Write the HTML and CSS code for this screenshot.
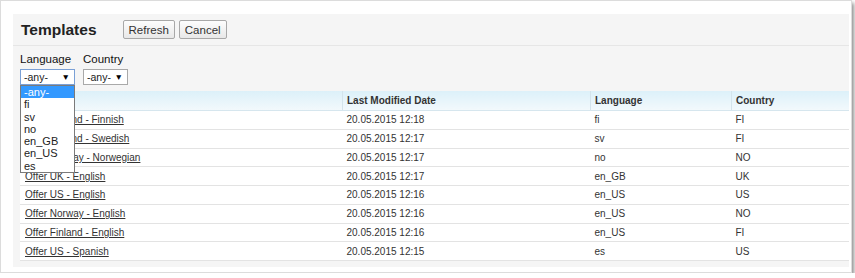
FILE: index.html
```html
<!DOCTYPE html>
<html lang="en">
<head>
    <meta charset="UTF-8">
    <title>Templates</title>
    <link rel="stylesheet" href="styles.css">
</head>
<body>
    <div class="window">
        <div class="panel">
            <div class="panel-header">
                <h2 class="title">Templates</h2>
                <button class="btn">Refresh</button>
                <button class="btn">Cancel</button>
            </div>

            <div class="filters">
                <div class="filter">
                    <div class="filter-label">Language</div>
                    <div class="picker picker-open lang-picker">
                        <span>-any-</span><span class="arrow">&#9660;</span>
                        <ul class="picker-list">
                            <li class="selected">-any-</li>
                            <li>fi</li>
                            <li>sv</li>
                            <li>no</li>
                            <li>en_GB</li>
                            <li>en_US</li>
                            <li>es</li>
                        </ul>
                    </div>
                </div>
                <div class="filter">
                    <div class="filter-label">Country</div>
                    <div class="picker country-picker">
                        <span>-any-</span><span class="arrow">&#9660;</span>
                    </div>
                </div>
            </div>

            <table class="list">
                <thead>
                    <tr>
                        <th class="col-name">Name</th>
                        <th class="col-date">Last Modified Date</th>
                        <th class="col-lang">Language</th>
                        <th class="col-country">Country</th>
                    </tr>
                </thead>
                <tbody>
                    <tr><td><a href="#">Offer Finland - Finnish</a></td><td>20.05.2015 12:18</td><td>fi</td><td>FI</td></tr>
                    <tr><td><a href="#">Offer Finland - Swedish</a></td><td>20.05.2015 12:17</td><td>sv</td><td>FI</td></tr>
                    <tr><td><a href="#">Offer Norway - Norwegian</a></td><td>20.05.2015 12:17</td><td>no</td><td>NO</td></tr>
                    <tr><td><a href="#">Offer UK - English</a></td><td>20.05.2015 12:17</td><td>en_GB</td><td>UK</td></tr>
                    <tr><td><a href="#">Offer US - English</a></td><td>20.05.2015 12:16</td><td>en_US</td><td>US</td></tr>
                    <tr><td><a href="#">Offer Norway - English</a></td><td>20.05.2015 12:16</td><td>en_US</td><td>NO</td></tr>
                    <tr><td><a href="#">Offer Finland - English</a></td><td>20.05.2015 12:16</td><td>en_US</td><td>FI</td></tr>
                    <tr><td><a href="#">Offer US - Spanish</a></td><td>20.05.2015 12:15</td><td>es</td><td>US</td></tr>
                </tbody>
            </table>
        </div>
    </div>
</body>
</html>
```

FILE: styles.css
```css
body {
    margin: 0;
    background: #fff;
    font-family: "Liberation Sans", Arial, sans-serif;
    color: #333;
}
.window {
    width: 836px;
    height: 253px;
    padding: 13px 2px 5px 12px;
    background: #fff;
    border: 1px solid #dcdcdc;
    box-shadow: 2px 3px 4px rgba(0, 0, 0, 0.45);
}
.panel {
    background: #f5f5f5;
    height: 253px;
}
.panel-header {
    display: flex;
    align-items: center;
    height: 31px;
    padding-left: 8px;
    border-bottom: 1px solid #e6e6e6;
}
.title {
    margin: 0 26px 0 0;
    font-size: 15.5px;
    font-weight: bold;
    color: #222;
}
.btn {
    height: 19px;
    margin-right: 4px;
    padding: 0 5px;
    font-family: "Liberation Sans", Arial, sans-serif;
    font-size: 11.5px;
    color: #333;
    background: linear-gradient(#fdfdfd, #e8e8e8);
    border: 1px solid #a8a8a8;
    border-radius: 2px;
}
.filters {
    display: flex;
    gap: 8px;
    padding: 7px 0 0 7px;
    height: 38px;
}
.filter-label {
    font-size: 11.5px;
    color: #111;
    margin-bottom: 3px;
    height: 13px;
}
.picker {
    position: relative;
    display: flex;
    justify-content: space-between;
    align-items: center;
    box-sizing: border-box;
    height: 16px;
    padding: 0 4px 0 3px;
    font-size: 10.5px;
    color: #222;
    background: #fff;
    border: 1px solid #a9a9a9;
}
.lang-picker {
    width: 55px;
    border-color: #7aa0d6;
}
.country-picker {
    width: 45px;
}
.arrow {
    font-size: 8.5px;
    color: #000;
}
.picker-list {
    position: absolute;
    top: 15px;
    left: -1px;
    z-index: 2;
    width: 55px;
    margin: 0;
    padding: 0;
    list-style: none;
    box-sizing: border-box;
    background: #fff;
    border: 1px solid #7a7a7a;
}
.picker-list li {
    height: 12.3px;
    line-height: 12px;
    padding-left: 3px;
    font-size: 11px;
    color: #222;
}
.picker-list li.selected {
    background: #3399ff;
    color: #fff;
}
.list {
    width: 829px;
    margin-left: 7px;
    border-collapse: collapse;
    background: #fff;
    font-size: 10px;
    table-layout: fixed;
}
.list th {
    height: 19px;
    padding: 0 4px;
    text-align: left;
    font-weight: bold;
    color: #333;
    background: linear-gradient(#dcf0f9, #f2f9fc);
    border-left: 1px solid #d4e4ec;
    border-bottom: 1px solid #d6e6ee;
}
.list th:first-child {
    border-left: none;
}
.list td {
    height: 17.75px;
    padding: 0 4px;
    border-bottom: 1px solid #e3e3e3;
    color: #333;
}
.list td:first-child {
    padding-left: 5px;
}
.list a {
    color: #333;
}
.col-name { width: 314px; }
.col-date { width: 239px; }
.col-lang { width: 132px; }
```
